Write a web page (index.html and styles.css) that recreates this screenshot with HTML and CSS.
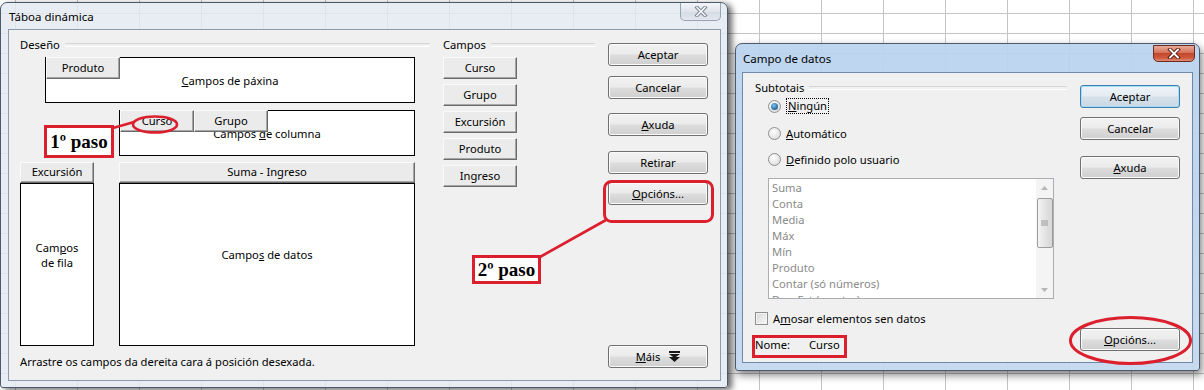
FILE: index.html
```html
<!DOCTYPE html>
<html lang="gl">
<head>
<meta charset="UTF-8">
<title>Táboa dinámica</title>
<link rel="stylesheet" href="styles.css">
</head>
<body>
<div class="desk">

    <!-- dialogo 1: taboa dinamica -->
    <div class="win win-pivot">
        <div class="win-bar">
            <span class="win-title">Táboa dinámica</span>
            <span class="win-close">
                <svg width="14" height="11" viewBox="0 0 14 11"><path d="M3 1.5L11 9.5M11 1.5L3 9.5" stroke="#7d8894" stroke-width="3.6" stroke-linecap="square"/><path d="M3 1.5L11 9.5M11 1.5L3 9.5" stroke="#f4f6f8" stroke-width="1.6" stroke-linecap="square"/></svg>
            </span>
        </div>
        <div class="client pivot">
            <div class="col-layout">
                <div class="group-head"><span>Deseño</span></div>
                <div class="area area-page">
                    <span class="area-label"><span><u>C</u>ampos de páxina</span></span>
                    <span class="tab">Produto</span>
                </div>
                <div class="area area-col">
                    <span class="area-label"><span>Campos <u>d</u>e columna</span></span>
                    <span class="tab">Curso</span>
                    <span class="tab">Grupo</span>
                </div>
                <div class="area-grid">
                    <div class="area-stack">
                        <div class="tab tab-head">Excursión</div>
                        <div class="area-body"><span>Cam<u>p</u>os<br>de fila</span></div>
                    </div>
                    <div class="area-stack">
                        <div class="tab tab-head">Suma - Ingreso</div>
                        <div class="area-body"><span>Campo<u>s</u> de datos</span></div>
                    </div>
                </div>
                <p class="hint">Arrastre os campos da dereita cara á posición desexada.</p>
            </div>
            <div class="col-fields">
                <div class="group-head"><span>Campos</span></div>
                <span class="tab field">Curso</span>
                <span class="tab field">Grupo</span>
                <span class="tab field">Excursión</span>
                <span class="tab field">Produto</span>
                <span class="tab field">Ingreso</span>
            </div>
            <div class="col-btns">
                <button class="btn b-ok"><span>Aceptar</span></button>
                <button class="btn b-cancel"><span>Cancelar</span></button>
                <button class="btn b-help"><span><u>A</u>xuda</span></button>
                <button class="btn b-remove"><span>Retirar</span></button>
                <button class="btn b-opts"><span><u>O</u>pcións...</span></button>
                <button class="btn b-more"><span><u>M</u>áis</span>
                    <svg width="11" height="11" viewBox="0 0 11 11"><rect x="0" y="0" width="11" height="2" fill="#1a1a1a"/><path d="M0 3H11L5.5 7Z" fill="#1a1a1a"/><path d="M0 6H11L5.5 11Z" fill="#1a1a1a"/></svg>
                </button>
            </div>
        </div>
    </div>

    <!-- dialogo 2: campo de datos -->
    <div class="win win-field">
        <div class="win-bar">
            <span class="win-title">Campo de datos</span>
            <span class="win-close red">
                <svg width="14" height="11" viewBox="0 0 14 11"><path d="M3 1.5L11 9.5M11 1.5L3 9.5" stroke="#5a1e12" stroke-width="3.8" stroke-linecap="square"/><path d="M3 1.5L11 9.5M11 1.5L3 9.5" stroke="#ffffff" stroke-width="1.8" stroke-linecap="square"/></svg>
            </span>
        </div>
        <div class="client field-dlg">
            <div class="col-sub">
                <div class="group-head"><span>Subtotais</span></div>
                <label class="opt opt-1"><span class="radio on"></span><span class="focus"><u>N</u>ingún</span></label>
                <label class="opt opt-2"><span class="radio"></span><span><u>A</u>utomático</span></label>
                <label class="opt opt-3"><span class="radio"></span><span><u>D</u>efinido polo usuario</span></label>
                <div class="listbox">
                    <ul class="list-items">
                        <li>Suma</li>
                        <li>Conta</li>
                        <li>Media</li>
                        <li>Máx</li>
                        <li>Mín</li>
                        <li>Produto</li>
                        <li>Contar (só números)</li>
                        <li>DesvEst (mostra)</li>
                    </ul>
                    <div class="scroll">
                        <span class="sc-arrow">
                            <svg width="7" height="4" viewBox="0 0 7 4"><path d="M0 4L3.5 0L7 4Z" fill="#b5b5b5"/></svg>
                        </span>
                        <span class="sc-thumb">
                            <svg width="7" height="7" viewBox="0 0 7 7"><path d="M0 1H7M0 3H7M0 5H7" stroke="#9a9a9a" stroke-width="1"/></svg>
                        </span>
                        <span class="sc-arrow sc-down">
                            <svg width="7" height="4" viewBox="0 0 7 4"><path d="M0 0L3.5 4L7 0Z" fill="#b5b5b5"/></svg>
                        </span>
                    </div>
                </div>
                <label class="check-row"><span class="check"></span><span>A<u>m</u>osar elementos sen datos</span></label>
                <div class="name-row"><span class="name-label">Nome:</span><span>Curso</span></div>
            </div>
            <div class="col-btns">
                <button class="btn default b2-ok"><span>Aceptar</span></button>
                <button class="btn b2-cancel"><span>Cancelar</span></button>
                <button class="btn b2-help"><span><u>A</u>xuda</span></button>
                <button class="btn b2-opts"><span><u>O</u>pcións...</span></button>
            </div>
        </div>
    </div>

    <!-- anotacions -->
    <div class="note note-1">1º paso</div>
    <div class="note note-2">2º paso</div>
    <svg class="marks" width="1204" height="390" viewBox="0 0 1204 390">
        <g fill="none" stroke="#dc1f2d">
            <ellipse cx="155" cy="124.5" rx="22" ry="8" stroke-width="2.6"/>
            <line x1="113" y1="128" x2="134" y2="122" stroke-width="2.6"/>
            <rect x="604.5" y="181.5" width="108" height="40" rx="7" stroke-width="3"/>
            <line x1="540" y1="257" x2="606" y2="220" stroke-width="2.6"/>
            <rect x="753.5" y="336.5" width="92" height="20" stroke-width="3"/>
            <ellipse cx="1130.5" cy="340.5" rx="60" ry="23" stroke-width="3"/>
        </g>
    </svg>
</div>
</body>
</html>
```

FILE: styles.css
```css
* {
    box-sizing: border-box;
}

body {
    margin: 0;
    font: 11.2px/15px "Noto Sans", "Open Sans", sans-serif;
    color: #000;
}

ul {
    margin: 0;
    padding: 0;
    list-style: none;
}

p {
    margin: 0;
}

button {
    font: inherit;
    color: #000;
}

/* folla de calculo ao fondo */
.desk {
    position: relative;
    width: 1204px;
    height: 390px;
    overflow: hidden;
    background-color: #fff;
    background-image: linear-gradient(to right, #c4c4c4 1px, transparent 1px),
                      linear-gradient(to bottom, #c4c4c4 1px, transparent 1px);
    background-size: 62px 20px;
    background-position: 15px 13px;
}

/* ventas */
.win {
    position: absolute;
    display: flex;
    flex-direction: column;
    border: 1px solid #4d5a6b;
    border-radius: 7px 7px 3px 3px;
}

.win-pivot {
    left: 0;
    top: 2px;
    width: 728px;
    height: 386px;
    padding: 0 6px 6px 7px;
    background: rgba(228, 234, 241, 0.84);
    box-shadow: 4px 2px 6px rgba(0, 0, 0, 0.6);
}

.win-field {
    left: 735px;
    top: 43px;
    width: 465px;
    height: 328px;
    padding: 0 6px 7px 6px;
    background: linear-gradient(to bottom, rgba(186, 211, 238, 0.94), rgba(196, 216, 239, 0.94));
    box-shadow: 2px 4px 8px rgba(0, 0, 0, 0.5);
}

.win-bar {
    display: flex;
    align-items: center;
    height: 26px;
}

.win-field .win-bar {
    height: 28px;
}

.win-title {
    padding-left: 1px;
    font-size: 11.5px;
}

.win-close {
    align-self: flex-start;
    margin-left: auto;
    margin-right: 0;
    width: 41px;
    height: 18px;
    display: flex;
    align-items: center;
    justify-content: center;
    border: 1px solid #97a4b3;
    border-top: 0;
    border-radius: 0 0 5px 5px;
    background: linear-gradient(to bottom, #f3f5f8, #dfe5ec 50%, #d4dbe4 51%, #e3e8ee);
}

.win-close.red {
    margin-top: 1px;
    margin-right: -2px;
    width: 42px;
    height: 17px;
    border: 1px solid #6a2b20;
    border-radius: 0 0 5px 5px;
    background: linear-gradient(to bottom, #e9ab98, #d6725a 45%, #c4472d 50%, #cf5a3d 80%, #e1907a);
}

.client {
    flex: 1;
    display: flex;
    gap: 13px;
    background: #f0f0f0;
    border: 1px solid #8d9bac;
}

.pivot {
    padding: 7px 12px 0 11px;
}

.field-dlg {
    padding: 7px 12px 0 12px;
    border-color: #6f89a8;
}

/* cabeceiras de grupo */
.group-head {
    display: flex;
    align-items: center;
    height: 15px;
}

.group-head::after {
    content: "";
    flex: 1;
    height: 2px;
    margin-left: 5px;
    border-top: 1px solid #d5d5d5;
    border-bottom: 1px solid #fff;
}

/* botons clasicos dos campos */
.tab {
    position: relative;
    z-index: 1;
    display: block;
    width: 74px;
    height: 22px;
    line-height: 19px;
    text-align: center;
    background: #ebebeb;
    border-top: 1px solid #fafafa;
    border-left: 1px solid #fafafa;
    border-right: 1px solid #6b6b6b;
    border-bottom: 1px solid #6b6b6b;
    box-shadow: inset -1px -1px 0 #a6a6a6;
}

.col-layout {
    width: 410px;
    display: flex;
    flex-direction: column;
}

.area {
    position: relative;
    display: flex;
    align-items: flex-start;
    background: #fff;
    border: 1px solid #000;
}

.area .tab {
    margin-top: -1px;
}

.area .tab:first-of-type {
    margin-left: -1px;
}

.area-page {
    margin: 5px 0 0 25px;
    width: 370px;
    height: 46px;
}

.area-col {
    margin: 7px 0 0 99px;
    width: 296px;
    height: 46px;
}

.area-label {
    position: absolute;
    inset: 0;
    display: flex;
    align-items: center;
    justify-content: center;
}

.area-grid {
    display: grid;
    grid-template-columns: 74px 296px;
    column-gap: 25px;
    margin-top: 6px;
}

.tab-head {
    width: auto;
    height: 21px;
    line-height: 18px;
}

.area-body {
    height: 163px;
    padding-bottom: 20px;
    display: flex;
    align-items: center;
    justify-content: center;
    text-align: center;
    background: #fff;
    border: 1px solid #000;
}

.hint {
    margin-top: auto;
    margin-bottom: 11px;
}

.col-fields {
    width: 152px;
    display: flex;
    flex-direction: column;
    gap: 5px;
}

/* botons vista */
.col-btns {
    width: 100px;
    display: flex;
    flex-direction: column;
}

.btn {
    display: flex;
    align-items: center;
    justify-content: center;
    gap: 9px;
    width: 100px;
    height: 23px;
    padding: 0;
    border: 1px solid #707070;
    border-radius: 3px;
    background: linear-gradient(to bottom, #f2f2f2, #ebebeb 48%, #dddddd 52%, #cfcfcf);
    box-shadow: inset 0 0 0 1px #fbfbfb;
}

.btn.default {
    border-color: #3c7fb1;
    box-shadow: inset 0 0 0 1px #a9dcf5;
    background: linear-gradient(to bottom, #eef4f8, #e4ecf2 48%, #d6e1ea 52%, #cad8e4);
}

.b-ok { margin-top: 6px; }
.b-cancel { margin-top: 10px; }
.b-help { margin-top: 14px; }
.b-remove { margin-top: 15px; }
.b-opts { margin-top: 8px; }
.b-more { margin-top: auto; margin-bottom: 12px; }

.b2-ok { margin-top: 5px; }
.b2-cancel { margin-top: 9px; }
.b2-help { margin-top: 16px; }
.b2-opts { margin-top: auto; margin-bottom: 11px; }

/* campo de datos */
.col-sub {
    width: 312px;
    display: flex;
    flex-direction: column;
}

.opt {
    display: flex;
    align-items: center;
    gap: 5px;
    height: 18px;
    padding-left: 13px;
}

.opt-1 { margin-top: 2px; }
.opt-2 { margin-top: 9px; }
.opt-3 { margin-top: 8px; }

.radio {
    position: relative;
    width: 13px;
    height: 13px;
    border-radius: 50%;
    border: 1px solid #8e8f8f;
    background: radial-gradient(circle at 40% 35%, #ffffff, #d4d4d4);
}

.radio.on::after {
    content: "";
    position: absolute;
    left: 2px;
    top: 2px;
    width: 7px;
    height: 7px;
    border-radius: 50%;
    background: radial-gradient(circle at 40% 35%, #7fc2ee, #1f5f95 75%);
}

.focus {
    padding: 0 1px;
    line-height: 14px;
    border: 1px dotted #000;
}

.listbox {
    display: flex;
    margin: 10px 0 0 13px;
    width: 286px;
    height: 121px;
    background: #fff;
    border: 1px solid #abadb3;
    overflow: hidden;
}

.list-items {
    flex: 1;
    padding: 1px 0 0 3px;
    color: #8a8a8a;
    line-height: 16px;
}

.scroll {
    width: 17px;
    display: flex;
    flex-direction: column;
    align-items: center;
    background: #f4f4f4;
}

.sc-arrow {
    height: 17px;
    display: flex;
    align-items: center;
    justify-content: center;
}

.sc-down {
    margin-top: auto;
}

.sc-thumb {
    width: 16px;
    height: 50px;
    margin-top: 2px;
    display: flex;
    align-items: center;
    justify-content: center;
    border: 1px solid #9d9d9d;
    border-radius: 2px;
    background: linear-gradient(to right, #f3f3f3, #e4e4e4 50%, #d6d6d6);
}

.check-row {
    display: flex;
    align-items: center;
    gap: 5px;
    height: 18px;
    margin-top: 10px;
}

.check {
    width: 13px;
    height: 13px;
    border: 1px solid #8e8f8f;
    background: linear-gradient(135deg, #d8d8d8, #f8f8f8);
    box-shadow: inset 0 0 0 1px #f4f4f4;
}

.name-row {
    display: flex;
    align-items: center;
    height: 18px;
    margin-top: 8px;
}

.name-label {
    width: 54px;
}

/* anotacions en vermello */
.note {
    position: absolute;
    z-index: 3;
    display: flex;
    align-items: center;
    justify-content: center;
    background: #fff;
    border: 3px solid #dc1f2d;
    font: bold 19px/1 "Liberation Serif", serif;
}

.note-1 {
    left: 44px;
    top: 125px;
    width: 70px;
    height: 33px;
}

.note-2 {
    left: 472px;
    top: 255px;
    width: 69px;
    height: 29px;
}

.marks {
    position: absolute;
    left: 0;
    top: 0;
    z-index: 2;
    pointer-events: none;
}
```
